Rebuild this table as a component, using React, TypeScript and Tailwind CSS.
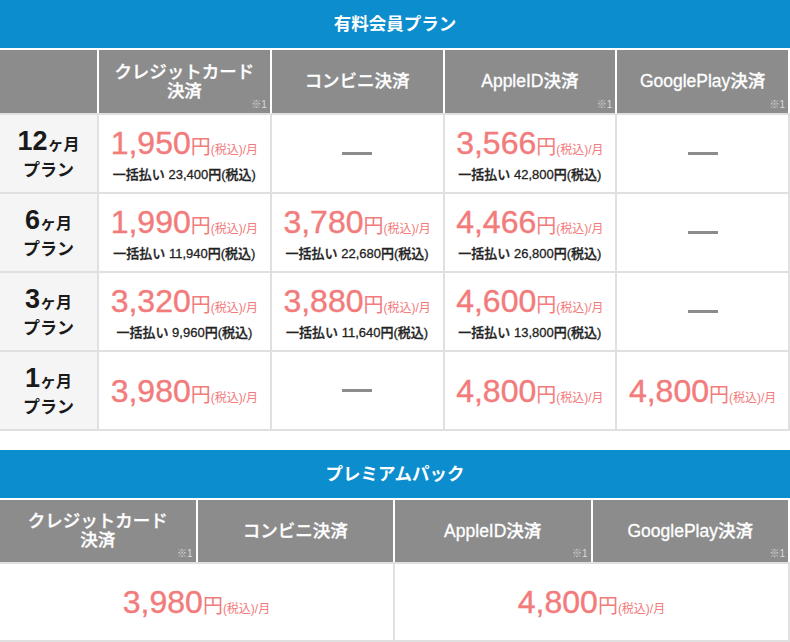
import React from "react";

const FONT = "font-['Liberation_Sans','Noto_Sans_CJK_JP',sans-serif]";

function Price({ v, sub }: { v: string; sub?: string }) {
  return (
    <div className="flex flex-col items-center">
      <div className="flex items-baseline text-[#f27b7b]">
        <span className="text-[32px] leading-none [-webkit-text-stroke:0.4px_#f27b7b]">{v}</span>
        <span className="text-[20px] leading-none">円</span>
        <span className="text-[12px] leading-none">(税込)/月</span>
      </div>
      {sub && (
        <div className="mt-[9px] text-[13px] leading-none font-medium text-[#222] [-webkit-text-stroke:0.3px_#222]">
          一括払い {sub}円(税込)
        </div>
      )}
    </div>
  );
}

function Dash() {
  return <div className="w-[30px] h-[3px] bg-[#8c8c8c]" />;
}

function Cell({ children }: { children?: React.ReactNode }) {
  return <div className="bg-white flex items-center justify-center">{children}</div>;
}

function HeadCell({ lines, note }: { lines: string[]; note?: boolean }) {
  return (
    <div className="relative bg-[#8c8c8c] flex flex-col items-center justify-center text-white font-medium text-[17.5px] leading-[19px] [-webkit-text-stroke:0.3px_#ffffff]">
      {lines.map((l) => (
        <div key={l}>{l}</div>
      ))}
      {note && (
        <span className="absolute right-[3px] bottom-[3px] text-[10px] leading-none font-normal text-[#d9d9d9] [-webkit-text-stroke:0px]">※1</span>
      )}
    </div>
  );
}

function Label({ n }: { n: string }) {
  return (
    <div className="bg-[#f5f5f5] flex flex-col items-center justify-center font-bold text-[#1a1a1a]">
      <div className="flex items-baseline">
        <span className="text-[27px] leading-none">{n}</span>
        <span className="text-[16px] leading-none">ヶ月</span>
      </div>
      <div className="text-[17px] leading-none mt-[7px]">プラン</div>
    </div>
  );
}

export default function App() {
  return (
    <div className={`w-[790px] h-[642px] bg-white overflow-hidden ${FONT}`}>
      <section>
        <div className="h-[48px] bg-[#0b8dce] flex items-center justify-center text-white font-bold text-[17.5px]">
          有料会員プラン
        </div>
        <div className="grid grid-cols-[97px_1fr_1fr_1fr_1fr] auto-rows-[63px] gap-[2px] pt-[2px] pr-[2px] bg-white">
          <div className="bg-[#8c8c8c]" />
          <HeadCell lines={["クレジットカード", "決済"]} note />
          <HeadCell lines={["コンビニ決済"]} />
          <HeadCell lines={["AppleID決済"]} note />
          <HeadCell lines={["GooglePlay決済"]} note />
        </div>
        <div className="grid grid-cols-[97px_1fr_1fr_1fr_1fr] auto-rows-[77px] gap-[2px] py-[2px] pr-[2px] bg-[#e0e0e0]">
          <Label n="12" />
          <Cell><Price v="1,950" sub="23,400" /></Cell>
          <Cell><Dash /></Cell>
          <Cell><Price v="3,566" sub="42,800" /></Cell>
          <Cell><Dash /></Cell>

          <Label n="6" />
          <Cell><Price v="1,990" sub="11,940" /></Cell>
          <Cell><Price v="3,780" sub="22,680" /></Cell>
          <Cell><Price v="4,466" sub="26,800" /></Cell>
          <Cell><Dash /></Cell>

          <Label n="3" />
          <Cell><Price v="3,320" sub="9,960" /></Cell>
          <Cell><Price v="3,880" sub="11,640" /></Cell>
          <Cell><Price v="4,600" sub="13,800" /></Cell>
          <Cell><Dash /></Cell>

          <Label n="1" />
          <Cell><Price v="3,980" /></Cell>
          <Cell><Dash /></Cell>
          <Cell><Price v="4,800" /></Cell>
          <Cell><Price v="4,800" /></Cell>
        </div>
      </section>

      <section className="mt-[19px]">
        <div className="h-[48px] bg-[#0b8dce] flex items-center justify-center text-white font-bold text-[17.5px]">
          プレミアムパック
        </div>
        <div className="grid grid-cols-4 auto-rows-[62px] gap-[2px] pt-[2px] pr-[2px] bg-white">
          <HeadCell lines={["クレジットカード", "決済"]} note />
          <HeadCell lines={["コンビニ決済"]} />
          <HeadCell lines={["AppleID決済"]} note />
          <HeadCell lines={["GooglePlay決済"]} note />
        </div>
        <div className="grid grid-cols-2 auto-rows-[76px] gap-[2px] py-[2px] pr-[2px] bg-[#e0e0e0]">
          <Cell><Price v="3,980" /></Cell>
          <Cell><Price v="4,800" /></Cell>
        </div>
      </section>
    </div>
  );
}
